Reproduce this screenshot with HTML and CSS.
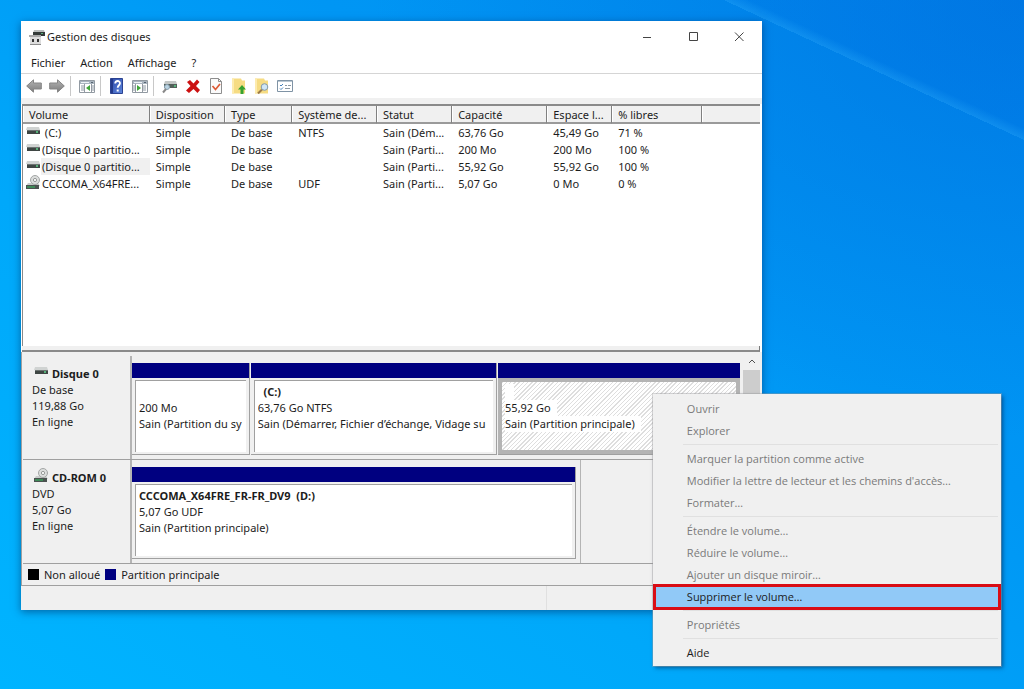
FILE: index.html
```
<!DOCTYPE html>
<html lang="fr">
<head>
    <title>Gestion des disques</title>
    <meta charset="utf-8" />
    <meta name="viewport" content="width=device-width, initial-scale=1.0" />
    <link rel="stylesheet" href="styles.css">
</head>
<body>
<!--icônes partagées-->
<svg class="defs" aria-hidden="true">
    <defs>
        <linearGradient id="g-arrow" x1="0" y1="0" x2="0" y2="1">
            <stop offset="0" stop-color="#b4b4b4"/><stop offset="1" stop-color="#7c7c7c"/>
        </linearGradient>
        <linearGradient id="g-help" x1="0" y1="0" x2="1" y2="1">
            <stop offset="0" stop-color="#2c49a8"/><stop offset="1" stop-color="#5d86dc"/>
        </linearGradient>
        <symbol id="drive" viewBox="0 0 14 8">
            <path d="M1 0h12l1 3H0z" fill="#d0d3d2"/>
            <rect x="1" y="3" width="13" height="4" fill="#3f4644"/>
            <rect x="1" y="3" width="13" height="1" fill="#6d7472"/>
            <rect x="10" y="4" width="2" height="2" fill="#55b078"/>
        </symbol>
        <symbol id="cdrom" viewBox="0 0 14 14">
            <path d="M2 8h10l2 3H0z" fill="#c9cccb"/>
            <circle cx="9" cy="5" r="4.5" fill="#dcdedd" stroke="#a3a6a5" stroke-width="1"/>
            <circle cx="9" cy="5" r="1.6" fill="#fff" stroke="#969998" stroke-width="1"/>
            <rect y="10" width="13" height="4" fill="#4b5250"/>
            <rect x="1" y="11" width="8" height="2" fill="#3f8a58"/>
        </symbol>
        <symbol id="arrow" viewBox="0 0 16 14">
            <path d="M.7 7 7.5.8V4h7.8v6H7.5v3.2z" fill="url(#g-arrow)" stroke="#858585"/>
        </symbol>
    </defs>
</svg>

<main class="window">
    <header class="titlebar">
        <svg class="app-icon" viewBox="0 0 16 15"><path d="M5 0h10l1 3H4z" fill="#b9bdbc"/><path d="M4 2h12v4H4z" fill="#343a38"/><path d="M12 3h2v1h-2z" fill="#55b078"/><path d="M1 6h11v9H1z" fill="#dcdcdc"/><path d="M0 5h12v2H0z" fill="#a9a9a9"/><path d="M3 9h2v3H3zM8 9h2v3H8z" fill="#333"/><path d="M1 14h11v1H1z" fill="#8e8e8e"/></svg>
        <h1>Gestion des disques</h1>
        <div class="win-buttons">
            <button type="button" aria-label="Réduire"><svg viewBox="0 0 10 10"><path d="M1 5.5h8"/></svg></button>
            <button type="button" aria-label="Agrandir"><svg viewBox="0 0 10 10"><path d="M1.5.5h8v8h-8z"/></svg></button>
            <button type="button" aria-label="Fermer"><svg viewBox="0 0 10 10"><path d="M1 .5l8.500 8.500M9.500.5L1 9"/></svg></button>
        </div>
    </header>

    <nav class="menubar">
        <button type="button">Fichier</button>
        <button type="button">Action</button>
        <button type="button">Affichage</button>
        <button type="button">?</button>
    </nav>

    <div class="toolbar">
        <button type="button" aria-label="Précédent"><svg viewBox="0 0 16 16"><use href="#arrow" y="1" width="16" height="14"/></svg></button>
        <button type="button" aria-label="Suivant"><svg class="flip" viewBox="0 0 16 16"><use href="#arrow" y="1" width="16" height="14"/></svg></button>
        <span class="tool-sep"></span>
        <button type="button" aria-label="Arborescence"><svg viewBox="0 0 16 16"><path d="M.5 2.5h15v12H.5z" fill="#fff" stroke="#929aa2"/><path d="M1 3h14v3H1z" fill="#a9b4bf"/><path d="M2 4h8v1H2z" fill="#eef2f5"/><path d="M12 4h2v1h-2z" fill="#566370"/><path d="M5.5 6v8M12.5 6v8" stroke="#929aa2"/><path d="M2 8h3M2 10h3M2 12h3M13 8h2M13 10h2M13 12h2" stroke="#8d98a3"/><path d="M11 7v6L7 10z" fill="#3fa537"/></svg></button>
        <span class="tool-sep"></span>
        <button type="button" aria-label="Aide"><svg viewBox="0 0 16 16"><path d="M1.500.5h12v15h-12z" fill="url(#g-help)" stroke="#2b4291"/><path d="M2 1h2v14H2z" fill="#22398a"/><path d="M6.200 5.500C6.200 2.200 11 2.200 11 5.300c0 2-2.300 2-2.300 4.500" fill="none" stroke="#fff" stroke-width="1.800"/><path d="M7.700 11.500h2v2h-2z" fill="#fff"/></svg></button>
        <button type="button" aria-label="Volet Actions"><svg viewBox="0 0 16 16"><path d="M.5 2.500h15v12H.5z" fill="#fff" stroke="#929aa2"/><path d="M1 3h14v3H1z" fill="#a9b4bf"/><path d="M2 4h8v1H2z" fill="#eef2f5"/><path d="M12 4h2v1h-2z" fill="#566370"/><path d="M3.500 6v8M10.500 6v8" stroke="#929aa2"/><path d="M1 8h2M1 10h2M1 12h2M11 8h3M11 10h3M11 12h3" stroke="#8d98a3"/><path d="M5 7v6l4-3z" fill="#3fa537"/></svg></button>
        <span class="tool-sep"></span>
        <button type="button" aria-label="Analyser les disques"><svg viewBox="0 0 16 16"><path d="M3 3h11l1 3H2z" fill="#c3c7c6"/><path d="M2 6h13v4H2z" fill="#53605a"/><path d="M12 7h2v2h-2z" fill="#58b47c"/><circle cx="5" cy="9" r="2.500" fill="#b9d3e2" stroke="#8aa1b1"/><path d="M4 11l-3 3.500" stroke="#888" stroke-width="2"/></svg></button>
        <button type="button" aria-label="Supprimer"><svg viewBox="0 0 16 16"><path d="M2 4l3-2 3.500 3.500L12 1.500 14.500 4 11 8l4 4-2.500 3-4-4L4 15l-3-2.500L5.500 8z" fill="#cc1010"/></svg></button>
        <button type="button" aria-label="Vérifier"><svg viewBox="0 0 16 16"><path d="M2.500.5h8l3 3v12h-11z" fill="#fafafa" stroke="#8e8e8e"/><path d="M10.500.5v3h3" fill="none" stroke="#8e8e8e"/><path d="M4.500 8l3 3.500L12 6" fill="none" stroke="#dd5a35" stroke-width="1.700"/></svg></button>
        <button type="button" aria-label="Exporter"><svg viewBox="0 0 16 16"><path d="M1 .5h9l1 2h3v13H1z" fill="#f6dc83"/><path d="M1 .5h2v15H1z" fill="#fdebae"/><path d="M11 7l4 4.500h-2.500V16h-3v-4.500H7z" fill="#37a22f"/></svg></button>
        <button type="button" aria-label="Rechercher"><svg viewBox="0 0 16 16"><path d="M1 .5h9l1 2h3v13H1z" fill="#f6dc83"/><path d="M1 .5h2v15H1z" fill="#fdebae"/><path d="M8 11.500l-4 4" stroke="#9b7a4a" stroke-width="2"/><circle cx="10.500" cy="9" r="3.300" fill="#cfe6f6" stroke="#8199ab"/></svg></button>
        <button type="button" aria-label="Propriétés"><svg viewBox="0 0 16 16"><path d="M.5 2.500h15v11H.5z" fill="#fff" stroke="#7f93a5"/><path d="M1 3h14v1H1z" fill="#b9c8d4"/><path d="M3 7l1 1 2-2M3 10.500l1 1 2-2" fill="none" stroke="#417fba"/><path d="M8 7.500h2M11 7.500h3M8 10.500h5" stroke="#8b98a3"/></svg></button>
    </div>

    <!--liste des volumes-->
    <section class="volumes">
        <table>
            <colgroup>
                <col class="c-volume"><col class="c-layout"><col class="c-type"><col class="c-fs"><col class="c-status"><col class="c-size"><col class="c-free"><col class="c-pct"><col>
            </colgroup>
            <thead>
                <tr><th>Volume</th><th>Disposition</th><th>Type</th><th>Système de...</th><th>Statut</th><th>Capacité</th><th>Espace l...</th><th>% libres</th><th></th></tr>
            </thead>
            <tbody>
                <tr><td><div class="vol"><svg class="drive"><use href="#drive"/></svg><span class="vol-name">&nbsp;(C:)</span></div></td><td>Simple</td><td>De base</td><td>NTFS</td><td>Sain (Dém...</td><td>63,76 Go</td><td>45,49 Go</td><td>71 %</td><td></td></tr>
                <tr><td><div class="vol"><svg class="drive"><use href="#drive"/></svg><span class="vol-name">(Disque 0 partitio...</span></div></td><td>Simple</td><td>De base</td><td></td><td>Sain (Parti...</td><td>200 Mo</td><td>200 Mo</td><td>100 %</td><td></td></tr>
                <tr><td><div class="vol"><svg class="drive"><use href="#drive"/></svg><span class="vol-name current">(Disque 0 partitio...</span></div></td><td>Simple</td><td>De base</td><td></td><td>Sain (Parti...</td><td>55,92 Go</td><td>55,92 Go</td><td>100 %</td><td></td></tr>
                <tr><td><div class="vol"><svg class="cdrom"><use href="#cdrom"/></svg><span class="vol-name">CCCOMA_X64FRE...</span></div></td><td>Simple</td><td>De base</td><td>UDF</td><td>Sain (Parti...</td><td>5,07 Go</td><td>0 Mo</td><td>0 %</td><td></td></tr>
            </tbody>
        </table>
    </section>
    <div class="splitter"></div>

    <!--vue graphique-->
    <section class="graph">
        <div class="disks">
            <div class="disk">
                <div class="disk-info">
                    <h2><svg class="drive"><use href="#drive"/></svg>Disque 0</h2>
                    <p>De base</p>
                    <p>119,88 Go</p>
                    <p>En ligne</p>
                </div>
                <div class="parts">
                    <div class="part p-system">
                        <div class="part-bar"></div>
                        <div class="part-body"><b></b><p>200 Mo</p><p>Sain (Partition du sy</p></div>
                    </div>
                    <div class="part p-windows">
                        <div class="part-bar"></div>
                        <div class="part-body"><b>&nbsp;&nbsp;(C:)</b><p>63,76 Go NTFS</p><p>Sain (Démarrer, Fichier d’échange, Vidage su</p></div>
                    </div>
                    <div class="part p-data selected">
                        <div class="part-bar"></div>
                        <div class="part-body"><b>&nbsp;</b><p>55,92 Go</p><p>Sain (Partition principale)</p></div>
                    </div>
                </div>
            </div>
            <div class="disk">
                <div class="disk-info">
                    <h2><svg class="cdrom"><use href="#cdrom"/></svg>CD-ROM 0</h2>
                    <p>DVD</p>
                    <p>5,07 Go</p>
                    <p>En ligne</p>
                </div>
                <div class="parts parts-cd">
                    <div class="part">
                        <div class="part-bar"></div>
                        <div class="part-body"><b>CCCOMA_X64FRE_FR-FR_DV9&nbsp; (D:)</b><p>5,07 Go UDF</p><p>Sain (Partition principale)</p></div>
                    </div>
                </div>
            </div>
        </div>
        <div class="scrollbar">
            <button type="button" aria-label="Défiler vers le haut"><svg viewBox="0 0 8 6"><path d="M1 5l3-3 3 3"/></svg></button>
            <div class="thumb"></div>
        </div>
    </section>

    <div class="legend">
        <span class="swatch free"></span><span>Non alloué</span>
        <span class="swatch primary"></span><span>Partition principale</span>
    </div>
    <footer class="statusbar"><span></span><span></span></footer>
</main>

<!--menu contextuel-->
<div class="context-menu">
    <button type="button" disabled>Ouvrir</button>
    <button type="button" disabled>Explorer</button>
    <hr>
    <button type="button" disabled>Marquer la partition comme active</button>
    <button type="button" disabled>Modifier la lettre de lecteur et les chemins d'accès…</button>
    <button type="button" disabled>Formater…</button>
    <hr>
    <button type="button" disabled>Étendre le volume…</button>
    <button type="button" disabled>Réduire le volume…</button>
    <button type="button" disabled>Ajouter un disque miroir…</button>
    <button type="button" class="active">Supprimer le volume…</button>
    <hr>
    <button type="button" disabled>Propriétés</button>
    <hr>
    <button type="button">Aide</button>
</div>
</body>
</html>
```
FILE: styles.css
```
*{box-sizing: border-box;}
body{
    margin: 0;
    padding: 21px;
    min-height: 100vh;
    font: 11px/16px "Noto Sans", "Open Sans", sans-serif;
    color: #1c1c1c;
    background:
        linear-gradient(25deg, transparent 88%, rgba(60,180,255,.25) 88%, rgba(0,90,220,.1) 89%) no-repeat,
        radial-gradient(ellipse at 100% 0, rgba(0,110,220,.6), transparent 45%),
        linear-gradient(35deg, #00b4ff 0, #00a8fa 35%, #0096f4 65%, #008cf0 100%);
}
h1,h2,p{margin: 0;font-size: 11px;}
h1,p{font-weight: normal;}
button{
    border: 0;
    padding: 0;
    font: inherit;
    color: inherit;
    background: none;
}
svg{display: block;}
.defs{position: absolute;width: 0;height: 0;}
.drive{width: 14px;height: 8px;flex: none;}
.cdrom{width: 14px;height: 14px;flex: none;}

/*fenêtre*/
.window{
    width: 75.5%;
    background: #fff;
    box-shadow: 0 2px 8px rgba(0,30,80,.5);
}
.titlebar{display: flex;align-items: center;height: 32px;padding-left: 8px;}
.app-icon{width: 16px;height: 15px;margin-right: 2px;}
.titlebar h1{flex: 1;}
.win-buttons{display: flex;}
.win-buttons button{width: 46px;height: 32px;display: flex;align-items: center;justify-content: center;}
.win-buttons svg{width: 10px;height: 10px;fill: none;stroke: #444;}
.menubar{display: flex;gap: 15px;height: 21px;padding-left: 10px;border-bottom: 1px solid #d5d5d5;}
.menubar button{height: 20px;}

/*barre d'outils*/
.toolbar{
    display: flex;
    align-items: center;
    gap: 7px;
    height: 30px;
    padding: 0 5px;
    border-bottom: 6px solid #f0f0f0;
}
.toolbar svg{width: 16px;height: 16px;}
.toolbar .flip{transform: scaleX(-1);}
.tool-sep{width: 1px;height: 20px;margin: 0 1px 0 -2px;background: #c8c8c8;}

/*volumes*/
.volumes{
    margin: 0 2px 0 1px;
    min-height: 242px;
    border-top: 2px solid #8a8a8a;
    border-left: 1px solid #8a8a8a;
}
table{width: 100%;table-layout: fixed;border-collapse: separate;border-spacing: 0;}
.c-volume{width: 17.2%;}
.c-layout{width: 10.2%;}
.c-type{width: 9.1%;}
.c-fs{width: 11.5%;}
.c-status{width: 10.2%;}
.c-size{width: 12.9%;}
.c-free{width: 8.8%;}
.c-pct{width: 12.2%;}
th{
    padding: 2px 0 0 6px;
    line-height: 14px;
    font-weight: normal;
    text-align: left;
    white-space: nowrap;
    background: #f0f0f0;
    border-right: 1px solid #808080;
    border-bottom: 2px solid #9a9a9a;
    box-shadow: inset 1px 0 #fff;
}
th:last-child{border-right: 0;}
td{height: 17px;padding: 0 0 0 6px;line-height: 17px;white-space: nowrap;}
td:first-child{padding-left: 3px;}
.vol{display: flex;align-items: center;height: 17px;gap: 1px;}
.vol svg{margin-bottom: 3px;}
.vol-name{flex: 1;padding-left: 1px;}
.current{background: #f0f0f0;}
.splitter{
    height: 6px;
    margin: 0 2px 0 1px;
    background: #f0f0f0;
    border-right: 1px solid #7c7c7c;
    border-bottom: 2px solid #8a8a8a;
}

/*disques*/
.graph{
    display: flex;
    padding: 4px 2px 0 1px;
    background: #f0f0f0;
    border-left: 1px solid #a0a0a0;
}
.disks{flex: 1;min-width: 0;}
.disk{display: flex;height: 104px;border-bottom: 1px solid #a0a0a0;}
.disk-info{
    width: 109px;
    flex: none;
    padding: 10px 0 0 9px;
    border-right: 2px solid #b4b4b4;
}
.disk-info h2{display: flex;align-items: center;gap: 4px;height: 16px;padding-left: 2px;}
.disk-info h2 svg{margin-bottom: 6px;}
.parts{flex: 1;min-width: 0;display: flex;gap: 1px;padding: 7px 3px 4px 0;}
.parts-cd{flex: none;width: 62.3%;padding-right: 4px;border-right: 1px solid #b4b4b4;}
.part{min-width: 0;flex: 1;display: flex;flex-direction: column;border-right: 1px solid #a0a0a0;border-bottom: 1px solid #a0a0a0;}
.p-system{flex: 117;}
.p-windows{flex: 246;}
.p-data{flex: 243;border-right: 0;}
.part-bar{height: 15px;background: #000080;}
.part-body{
    flex: 1;
    margin: 2px 3px;
    padding: 3px 3px 0;
    background: #fff;
    border-top: 1px solid #a0a0a0;
    border-left: 1px solid #a0a0a0;
}
.part-body b,.part-body p{display: block;height: 16px;overflow: hidden;white-space: nowrap;}
.selected .part-body{
    margin: 0;
    padding-top: 2px;
    border: 4px solid #b4b4b4;
    background: repeating-linear-gradient(135deg, #dedede 0 1px, #fff 1px 3px);
}
.selected b,.selected p{width: fit-content;padding-right: 6px;background: #fff;}
.scrollbar{width: 17px;}
.scrollbar button{width: 100%;height: 14px;display: flex;align-items: center;justify-content: center;}
.scrollbar svg{width: 8px;height: 6px;margin-bottom: 4px;fill: none;stroke: #505050;stroke-width: 1px;}
.thumb{height: 90px;background: #cdcdcd;}

.legend{
    display: flex;
    align-items: center;
    gap: 5px;
    height: 22px;
    padding-left: 6px;
    background: #f0f0f0;
    border-left: 1px solid #a0a0a0;
    border-bottom: 1px solid #a0a0a0;
}
.swatch{width: 11px;height: 11px;}
.free{background: #000;}
.primary{background: #000080;}
.statusbar{display: flex;height: 24px;background: #f0f0f0;}
.statusbar span:first-child{width: 71%;border-right: 1px solid #e0e0e0;}

/*menu contextuel*/
.context-menu{
    position: absolute;
    top: 394px;
    right: 23px;
    width: 34%;
    padding: 4px 0 2px;
    font-family: "Open Sans", "Noto Sans", sans-serif;
    background: #f0f0f0;
    box-shadow: 0 0 0 1px rgba(160,160,160,.4), 2px 2px 4px rgba(0,20,60,.5);
}
.context-menu button{
    display: block;
    width: 100%;
    height: 22px;
    padding-left: 34px;
    text-align: left;
}
.context-menu button:disabled{color: #7a7a7a;}
.context-menu .active{
    height: 26px;
    margin: -2px 0;
    padding-left: 31px;
    border: 3px solid #d90d15;
    background: #91c9f7;
}
.context-menu hr{
    height: 1px;
    margin: 2px 3px 3px 30px;
    border: 0;
    background: #e0e0e0;
}
```
